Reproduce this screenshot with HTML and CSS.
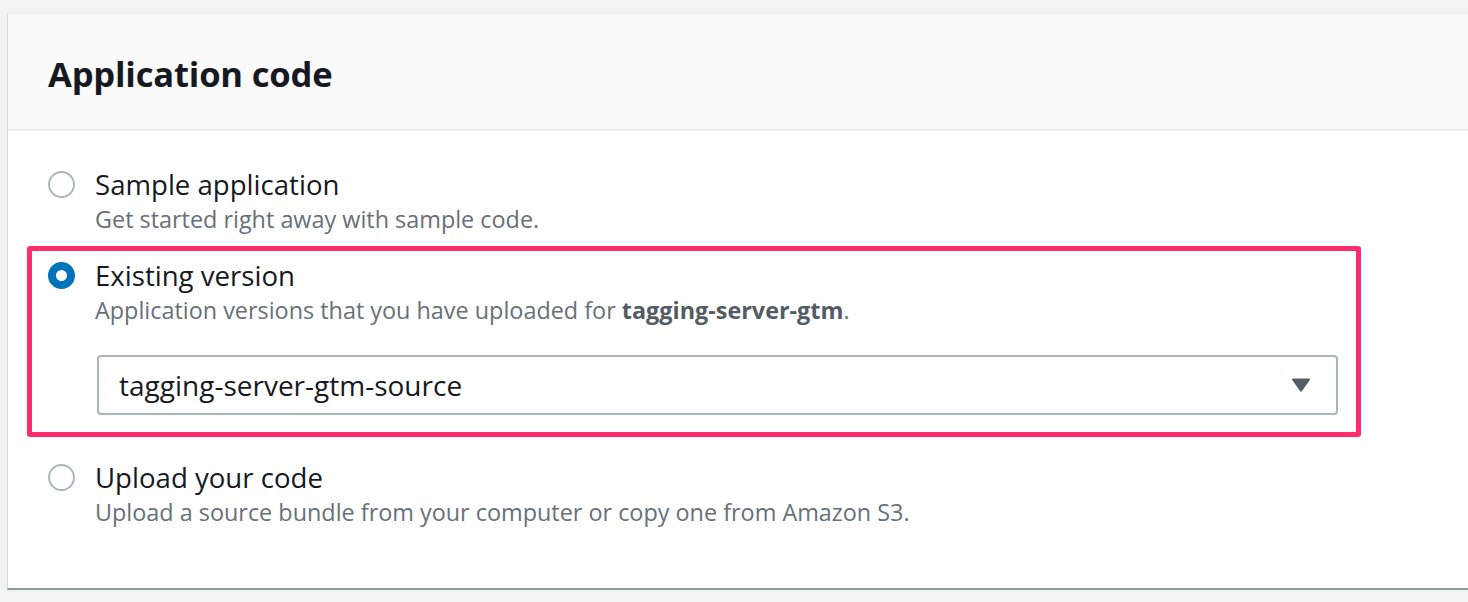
FILE: index.html
```html
<!DOCTYPE html>
<html lang="en">
<head>
<meta charset="utf-8">
<title>Application code</title>
<link rel="stylesheet" href="styles.css">
</head>
<body>
<section class="card">
  <header class="card-header">
    <h2 class="card-title">Application code</h2>
  </header>
  <div class="card-body">
    <div class="option">
      <span class="radio"></span>
      <div class="option-text">
        <div class="option-label">Sample application</div>
        <div class="option-desc">Get started right away with sample code.</div>
      </div>
    </div>
    <div class="option option-highlight">
      <span class="radio radio-checked"></span>
      <div class="option-text">
        <div class="option-label">Existing version</div>
        <div class="option-desc">Application versions that you have uploaded for <strong>tagging-server-gtm</strong>.</div>
        <div class="select">
          <span class="select-value">tagging-server-gtm-source</span>
          <svg class="select-caret" width="20" height="16" viewBox="0 0 20 16"><path d="M2 1.5 H18 a1 1 0 0 1 .8 1.6 L10.8 14.2 a1 1 0 0 1 -1.6 0 L1.2 3.1 A1 1 0 0 1 2 1.5 Z" fill="#545b64"/></svg>
        </div>
      </div>
    </div>
    <div class="option option-last">
      <span class="radio"></span>
      <div class="option-text">
        <div class="option-label">Upload your code</div>
        <div class="option-desc">Upload a source bundle from your computer or copy one from Amazon S3.</div>
      </div>
    </div>
  </div>
</section>
</body>
</html>
```
FILE: styles.css
```css
html, body {
  margin: 0;
  padding: 0;
}
body {
  background: #f2f3f3;
  overflow: hidden;
  padding: 13px 0 0 7px;
  font-family: "Open Sans", "Noto Sans", sans-serif;
  color: #16191f;
}
.card {
  background: #fff;
  margin-right: -40px;
  border-left: 1px solid #d5dbdb;
  border-top: 1px solid #eaeded;
  border-bottom: 2px solid #8d9999;
  height: 577px;
  box-sizing: border-box;
}
.card-header {
  background: #fafafa;
  height: 117px;
  border-bottom: 2px solid #eaeded;
  box-sizing: border-box;
  display: flex;
  align-items: center;
  padding: 4px 0 0 40px;
}
.card-title {
  margin: 0;
  font-size: 34.6px;
  font-weight: 700;
  letter-spacing: -0.2px;
  line-height: 40px;
}
.card-body {
  padding: 35px 0 0 40px;
  display: flex;
  flex-direction: column;
}
.option {
  display: flex;
  gap: 20px;
  align-items: flex-start;
}
.radio {
  width: 23px;
  height: 23px;
  border: 2px solid #aab7b8;
  border-radius: 50%;
  flex: none;
  margin-top: 5px;
}
.radio-checked {
  border: 8px solid #0073bb;
  width: 11px;
  height: 11px;
  background: #fff;
}
.option-label {
  font-size: 27.6px;
  line-height: 36px;
}
.option-desc {
  font-size: 23.4px;
  line-height: 34px;
  color: #687078;
}
.option-desc strong {
  font-weight: 700;
  color: #545b64;
}
.option-highlight {
  margin: 10px 0 0 -21px;
  width: 1334px;
  box-sizing: border-box;
  border: 5px solid #ff2d6b;
  border-radius: 3px;
  padding: 6px 0 17px 16px;
}
.option-text {
  flex: 1;
}
.select {
  margin: 28px 0 0 2px;
  width: 1241px;
  height: 60px;
  box-sizing: border-box;
  border: 2px solid #aab7b8;
  border-radius: 4px;
  display: flex;
  align-items: center;
  justify-content: space-between;
  padding: 0 25px 0 20px;
}
.select-value {
  font-size: 28px;
}
.select-caret {
  display: block;
}
.option-last {
  margin-top: 22px;
}
```
